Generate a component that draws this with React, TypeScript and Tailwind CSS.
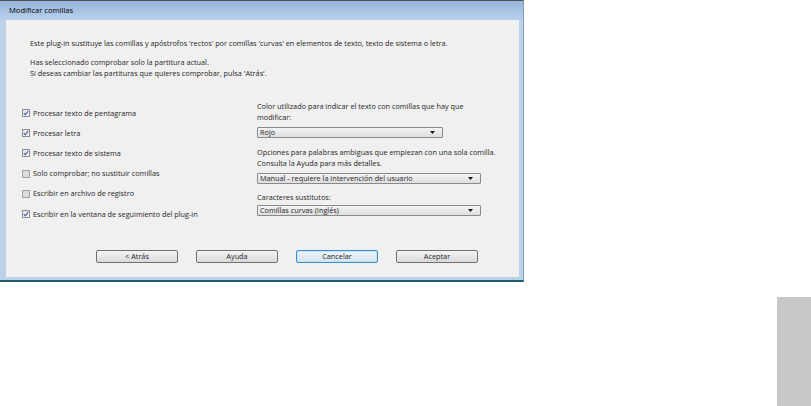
import React from 'react'

const options = [
  { label: 'Procesar texto de pentagrama', checked: true },
  { label: 'Procesar letra', checked: true },
  { label: 'Procesar texto de sistema', checked: true },
  { label: 'Solo comprobar; no sustituir comillas', checked: false },
  { label: 'Escribir en archivo de registro', checked: false },
  { label: 'Escribir en la ventana de seguimiento del plug-in', checked: true },
]

function Check({ checked }: { checked: boolean }) {
  return (
    <div
      className={
        checked
          ? 'w-[8px] h-[8px] border border-[#8f8f8f] bg-gradient-to-br from-[#e2e2e2] to-[#ffffff] flex items-center justify-center'
          : 'w-[8px] h-[8px] border border-[#a0a0a0] bg-[#dcdcdc]'
      }
    >
      {checked && (
        <svg width="6" height="6" viewBox="0 0 6 6">
          <path d="M0.8 3.2 L2.4 4.9 L5.3 0.8" fill="none" stroke="#4667b0" strokeWidth="1.2" />
        </svg>
      )}
    </div>
  )
}

function Select({ value, width }: { value: string; width: string }) {
  return (
    <div
      className={`${width} h-[11px] border border-[#8a8a8a] rounded-[1px] bg-gradient-to-b from-[#f4f4f4] to-[#dedede] flex items-center pl-[2px] pr-[7px]`}
    >
      <span className="flex-1 leading-none">{value}</span>
      <svg width="5" height="3" viewBox="0 0 5 3">
        <path d="M0 0 H5 L2.5 3 Z" fill="#111" />
      </svg>
    </div>
  )
}

function Btn({ label, focus }: { label: string; focus?: boolean }) {
  return (
    <div
      className={
        focus
          ? 'w-[82px] h-[13px] rounded-[2px] border border-[#3c8fd0] shadow-[inset_0_0_0_1px_#bfe3f7] bg-gradient-to-b from-[#eef5fb] to-[#d6e3ee] flex items-center justify-center'
          : 'w-[82px] h-[13px] rounded-[2px] border border-[#707070] bg-gradient-to-b from-[#f4f4f4] to-[#dadada] flex items-center justify-center'
      }
    >
      {label}
    </div>
  )
}

export default function App() {
  return (
    <div className="w-[811px] h-[406px] bg-white flex flex-col font-['Open_Sans',sans-serif] text-[7.3px] text-[#262626]">
      {/* dialog */}
      <div className="w-[524px] h-[282px] flex flex-col border-t border-[#505050] border-b-[2px] border-b-[#1e5e68] border-r border-r-[#7f9db9] bg-[#bcd2ea]">
        <div className="h-[19px] bg-gradient-to-b from-[#97b6dc] to-[#b9d0eb] flex items-center pl-[9px] text-[7.6px] text-black">
          Modificar comillas
        </div>
        <div className="flex-1 flex pl-[6px] pr-[4px] pb-[3px]">
          <div className="flex-1 bg-[#f0f0f0] flex flex-col pt-[18px] leading-[11px]">
            <div className="pl-[24px]">
              Este plug-in sustituye las comillas y apóstrofos 'rectos' por comillas 'curvas' en elementos de texto, texto de sistema o letra.
            </div>
            <div className="pl-[24px] mt-[8px]">
              <div>Has seleccionado comprobar solo la partitura actual.</div>
              <div>Si deseas cambiar las partituras que quieres comprobar, pulsa 'Atrás'.</div>
            </div>

            <div className="flex mt-[22px]">
              <div className="w-[251px] pl-[16px] pt-[2px]">
                {options.map((o) => (
                  <div key={o.label} className="h-[20.2px] flex items-center gap-[3px]">
                    <Check checked={o.checked} />
                    <span>{o.label}</span>
                  </div>
                ))}
              </div>
              <div className="flex-1 flex flex-col">
                <div>
                  <div>Color utilizado para indicar el texto con comillas que hay que</div>
                  <div>modificar:</div>
                </div>
                <div className="mt-[4px]">
                  <Select value="Rojo" width="w-[186px]" />
                </div>
                <div className="mt-[9px]">
                  <div>Opciones para palabras ambiguas que empiezan con una sola comilla.</div>
                  <div>Consulta la Ayuda para más detalles.</div>
                </div>
                <div className="mt-[4px]">
                  <Select value="Manual - requiere la intervención del usuario" width="w-[224px]" />
                </div>
                <div className="mt-[8px]">Caracteres sustitutos:</div>
                <div className="mt-[2px]">
                  <Select value="Comillas curvas (Inglés)" width="w-[224px]" />
                </div>
              </div>
            </div>

            <div className="mt-auto mb-[14px] flex pl-[90px] gap-[18px]">
              <Btn label="< Atrás" />
              <Btn label="Ayuda" />
              <Btn label="Cancelar" focus />
              <Btn label="Aceptar" />
            </div>
          </div>
        </div>
      </div>

      <div className="flex-1 flex justify-end pt-[15px]">
        <div className="w-[34px] h-full bg-[#c8c8c8]" />
      </div>
    </div>
  )
}
